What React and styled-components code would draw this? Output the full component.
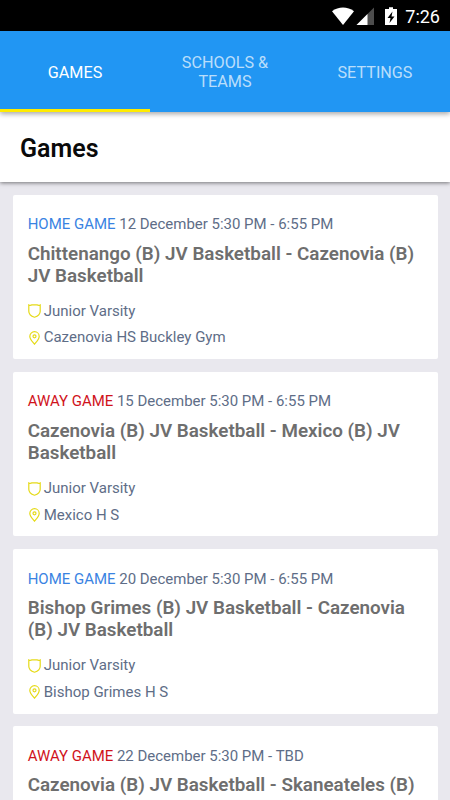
import React from 'react';
import styled, { createGlobalStyle } from 'styled-components';

const GlobalStyle = createGlobalStyle`
  * {
    box-sizing: border-box;
  }

  body {
    margin: 0;
    background: #e9e8ee;
    font-family: Roboto, 'Liberation Sans', sans-serif;
  }
`;

const Screen = styled.div`
  display: flex;
  flex-direction: column;
  width: 450px;
  height: 800px;
  overflow: hidden;
  background: #e9e8ee;
`;

const StatusBar = styled.div`
  display: flex;
  flex: none;
  align-items: center;
  justify-content: flex-end;
  height: 31px;
  padding: 1px 10px 0 0;
  background: #000;
  color: #fff;
  font-size: 18px;
`;

const StatusIcons = styled.svg`
  width: 66px;
  height: 20px;
  margin-right: 7px;
`;

const TabBar = styled.nav`
  display: flex;
  flex: none;
  position: relative;
  z-index: 2;
  height: 81px;
  background: #2196f3;
  box-shadow: 0 2px 5px rgba(0, 0, 0, 0.35);
`;

const Tab = styled.div`
  display: flex;
  flex: 1;
  align-items: center;
  justify-content: center;
  padding: 4px 20px 0;
  border-bottom: 3px solid ${(p) => (p.$active ? '#ffeb00' : 'transparent')};
  color: ${(p) => (p.$active ? '#fff' : 'rgba(255, 255, 255, 0.7)')};
  font-size: 16.2px;
  line-height: 19px;
  text-align: center;
`;

const Header = styled.header`
  display: flex;
  flex: none;
  align-items: center;
  position: relative;
  z-index: 1;
  height: 70px;
  padding: 4px 20px 0;
  background: #fff;
  box-shadow: 0 1px 4px rgba(0, 0, 0, 0.5);
`;

const PageTitle = styled.h1`
  margin: 0;
  color: #0a0a0a;
  font-size: 25px;
  font-weight: 600;
  line-height: 30px;
`;

const GameList = styled.main`
  display: flex;
  flex-direction: column;
  gap: 12.6px;
  padding: 12.7px 12.5px 0 12.5px;
`;

const Card = styled.article`
  flex: none;
  height: 164.6px;
  padding: 20.5px 15.2px 0;
  background: #fff;
  border-radius: 2px;
`;

const Meta = styled.div`
  color: #5e6d87;
  font-size: 14.97px;
  line-height: 19px;
  white-space: nowrap;
`;

const Kind = styled.span`
  color: ${(p) => (p.$away ? '#d0121b' : '#3983e2')};
`;

const Title = styled.h2`
  margin: 8.7px 0 10.8px;
  color: #6e6e6e;
  font-size: 18.82px;
  font-weight: 600;
  line-height: 22.2px;
  white-space: nowrap;
`;

const Detail = styled.div`
  display: flex;
  align-items: center;
  gap: 3px;
  height: 26.6px;
  color: #5e6d87;
  font-size: 15px;
  line-height: 19px;
`;

const DetailIcon = styled.svg`
  flex: none;
  width: 13px;
  height: 14px;
  fill: none;
  stroke: #e5da18;
  stroke-width: 1.2;
`;

const games = [
  {
    time: '12 December 5:30 PM - 6:55 PM',
    title: ['Chittenango (B) JV Basketball - Cazenovia (B)', 'JV Basketball'],
    venue: 'Cazenovia HS Buckley Gym',
  },
  {
    away: true,
    time: '15 December 5:30 PM - 6:55 PM',
    title: ['Cazenovia (B) JV Basketball - Mexico (B) JV', 'Basketball'],
    venue: 'Mexico H S',
  },
  {
    time: '20 December 5:30 PM - 6:55 PM',
    title: ['Bishop Grimes (B) JV Basketball - Cazenovia', '(B) JV Basketball'],
    venue: 'Bishop Grimes H S',
  },
  {
    away: true,
    time: '22 December 5:30 PM - TBD',
    title: ['Cazenovia (B) JV Basketball - Skaneateles (B)', 'JV Basketball'],
    venue: 'Skaneateles H S',
  },
];

const ShieldIcon = () => (
  <DetailIcon viewBox="0 0 13 14">
    <path d="M.8.900C1.800 1.500 3 1.300 4 .9h5c1 .4 2.200.6 3.200 0v6.300c0 2.900-2.500 5-5.700 6C3.300 12.200.8 10.100.8 7.200z" />
  </DetailIcon>
);

const PinIcon = () => (
  <DetailIcon viewBox="0 0 13 14">
    <path d="M6.500 13.200C4.600 10.800 1.800 8 1.800 5.400a4.700 4.700 0 0 1 9.400 0C11.200 8 8.400 10.800 6.500 13.200z" />
    <circle cx="6.500" cy="5.300" r="1.500" />
  </DetailIcon>
);

const GameCard = ({ game }) => (
  <Card>
    <Meta>
      <Kind $away={game.away}>{game.away ? 'AWAY GAME' : 'HOME GAME'}</Kind> {game.time}
    </Meta>
    <Title>
      {game.title[0]}
      <br />
      {game.title[1]}
    </Title>
    <Detail>
      <ShieldIcon />
      Junior Varsity
    </Detail>
    <Detail>
      <PinIcon />
      {game.venue}
    </Detail>
  </Card>
);

const App = () => (
  <>
    <GlobalStyle />
    <Screen>
      <StatusBar>
        <StatusIcons viewBox="0 0 66 20" fill="#fff">
          <path d="M0 5.200C6.500.400 15.500.400 22 5.200L11 19z" />
          <path d="M42 1.500V19H24.500z" opacity="0.3" />
          <path d="M35.500 8V19H24.500z" />
          <path
            fillRule="evenodd"
            d="M57 1.200h4v1.800h4V19h-12V3h4zM60.500 5.500 55.500 12h3l-1 5 5-6.500h-3z"
          />
        </StatusIcons>
        7:26
      </StatusBar>
      <TabBar>
        <Tab $active>GAMES</Tab>
        <Tab>SCHOOLS &amp; TEAMS</Tab>
        <Tab>SETTINGS</Tab>
      </TabBar>
      <Header>
        <PageTitle>Games</PageTitle>
      </Header>
      <GameList>
        {games.map((game) => (
          <GameCard key={game.time} game={game} />
        ))}
      </GameList>
    </Screen>
  </>
);

export default App;
